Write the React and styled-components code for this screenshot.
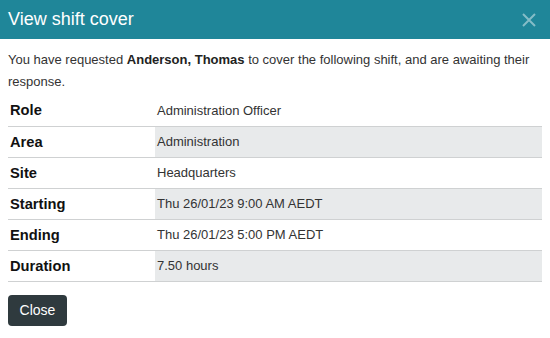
import React from 'react';
import styled, { createGlobalStyle } from 'styled-components';

const GlobalStyle = createGlobalStyle`
  html, body {
    margin: 0;
    padding: 0;
    background: #fff;
    font-family: "Liberation Sans", Arial, sans-serif;
  }
`;

const Dialog = styled.div`
  width: 550px;
  height: 338px;
  background: #fff;
  display: flex;
  flex-direction: column;
`;

const Header = styled.div`
  height: 39px;
  background: #1f8699;
  display: flex;
  align-items: center;
  justify-content: space-between;
  padding: 0 14px 0 8px;
`;

const Title = styled.h4`
  margin: 0;
  color: #fff;
  font-size: 18px;
  font-weight: 400;
`;

const CloseIcon = styled.button`
  border: 0;
  background: none;
  padding: 0;
  width: 14px;
  height: 14px;
  display: flex;
  cursor: pointer;
`;

const Body = styled.div`
  padding: 10px 8px 0;
`;

const Intro = styled.p`
  margin: 0 0 2px;
  font-size: 13px;
  line-height: 22px;
  color: #333;

  strong {
    color: #222;
  }
`;

const Table = styled.table`
  width: 534px;
  border-collapse: collapse;
`;

const Row = styled.tr`
  height: 31px;
  border-bottom: 1px solid #cfd1d2;
`;

const Label = styled.th`
  width: 143px;
  padding: 0 2px;
  text-align: left;
  font-size: 14.7px;
  font-weight: 700;
  color: #111;
`;

const Value = styled.td`
  padding: 0 2px;
  font-size: 13px;
  color: #333;
  background: ${({ $shaded }) => ($shaded ? '#e8eaeb' : 'transparent')};
`;

const Button = styled.button`
  margin-top: 13px;
  width: 59px;
  height: 31px;
  border: 0;
  border-radius: 4px;
  background: #2f3a3e;
  color: #fff;
  font-family: "Liberation Sans", Arial, sans-serif;
  font-size: 14px;
  cursor: pointer;
`;

const rows = [
  ['Role', 'Administration Officer'],
  ['Area', 'Administration'],
  ['Site', 'Headquarters'],
  ['Starting', 'Thu 26/01/23 9:00 AM AEDT'],
  ['Ending', 'Thu 26/01/23 5:00 PM AEDT'],
  ['Duration', '7.50 hours'],
];

const App = () => (
  <>
    <GlobalStyle />
    <Dialog>
      <Header>
        <Title>View shift cover</Title>
        <CloseIcon aria-label="Close">
          <svg width="14" height="14" viewBox="0 0 14 14">
            <path d="M1 1L13 13M13 1L1 13" stroke="rgba(255,255,255,0.45)" strokeWidth="2" />
          </svg>
        </CloseIcon>
      </Header>
      <Body>
        <Intro>
          You have requested <strong>Anderson, Thomas</strong> to cover the following shift, and are awaiting their response.
        </Intro>
        <Table>
          <tbody>
            {rows.map(([label, value], i) => (
              <Row key={label}>
                <Label>{label}</Label>
                <Value $shaded={i % 2 === 1}>{value}</Value>
              </Row>
            ))}
          </tbody>
        </Table>
        <Button>Close</Button>
      </Body>
    </Dialog>
  </>
);

export default App;
